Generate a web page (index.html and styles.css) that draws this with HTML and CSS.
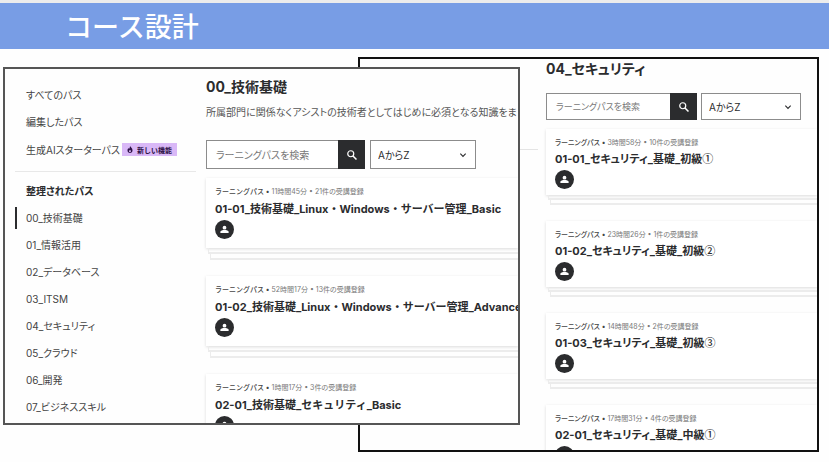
FILE: index.html
```html
<!DOCTYPE html>
<html lang="ja">
<head>
    <meta charset="UTF-8">
    <meta name="viewport" content="width=device-width, initial-scale=1.0">
    <title>コース設計</title>
    <link rel="stylesheet" href="styles.css">
</head>
<body>
    <svg class="sprite" aria-hidden="true">
        <symbol id="icon-search" viewBox="0 0 24 24">
            <circle cx="9.500" cy="9.500" r="6" fill="none" stroke="currentColor" stroke-width="2.4"/>
            <path d="M14 14l7 7" fill="none" stroke="currentColor" stroke-width="3"/>
        </symbol>
        <symbol id="icon-user" viewBox="0 0 24 24">
            <circle cx="12" cy="7" r="5"/>
            <path d="M1 21v-3C1 15 7 13.500 12 13.500s11 1.500 11 4.500v3z"/>
        </symbol>
        <symbol id="icon-chevron" viewBox="0 0 12 12">
            <path d="M2 4l4 4 4-4" fill="none" stroke="currentColor" stroke-width="1.700"/>
        </symbol>
        <symbol id="icon-flame" viewBox="0 0 12 14">
            <path fill-rule="evenodd" d="M6 0c1 2 5 4 5 8.500C11 12 9 14 6 14S1 12 1 8.500C1 6.500 2 5 3 4l1 2C5.500 4.500 6 2 6 0zM6 7.500c-1 1-2 2-2 3.200 0 1 .8 1.800 2 1.800s2-.8 2-1.800C8 9.500 7 8.500 6 7.500z"/>
        </symbol>
    </svg>

    <header class="page-header">
        <h1>コース設計</h1>
    </header>

    <div class="stage">
        <section class="window window-back">
            <div class="sidebar-rule"></div>
            <main class="content">
                <h2>04_セキュリティ</h2>
                <form class="toolbar">
                    <div class="search">
                        <input type="text" placeholder="ラーニングパスを検索" aria-label="ラーニングパスを検索">
                        <button type="button" aria-label="検索"><svg><use href="#icon-search"/></svg></button>
                    </div>
                    <div class="sort">
                        <select aria-label="並べ替え"><option>AからZ</option></select>
                        <svg><use href="#icon-chevron"/></svg>
                    </div>
                </form>
                <ul class="path-list">
                    <li>
                        <article class="card">
                            <p class="meta"><b>ラーニングパス •</b> 3時間58分 • 10件の受講登録</p>
                            <h3>01-01_セキュリティ_基礎_初級<span class="num">①</span></h3>
                            <span class="avatar"><svg><use href="#icon-user"/></svg></span>
                        </article>
                        <div class="layer"></div>
                        <div class="layer layer-last"></div>
                    </li>
                    <li>
                        <article class="card">
                            <p class="meta"><b>ラーニングパス •</b> 23時間26分 • 1件の受講登録</p>
                            <h3>01-02_セキュリティ_基礎_初級<span class="num">②</span></h3>
                            <span class="avatar"><svg><use href="#icon-user"/></svg></span>
                        </article>
                        <div class="layer"></div>
                        <div class="layer layer-last"></div>
                    </li>
                    <li>
                        <article class="card">
                            <p class="meta"><b>ラーニングパス •</b> 14時間48分 • 2件の受講登録</p>
                            <h3>01-03_セキュリティ_基礎_初級<span class="num">③</span></h3>
                            <span class="avatar"><svg><use href="#icon-user"/></svg></span>
                        </article>
                        <div class="layer"></div>
                        <div class="layer layer-last"></div>
                    </li>
                    <li>
                        <article class="card">
                            <p class="meta"><b>ラーニングパス •</b> 17時間31分 • 4件の受講登録</p>
                            <h3>02-01_セキュリティ_基礎_中級<span class="num">①</span></h3>
                            <span class="avatar"><svg><use href="#icon-user"/></svg></span>
                        </article>
                    </li>
                </ul>
            </main>
        </section>

        <section class="window window-front">
            <nav class="sidebar">
                <ul class="nav-top">
                    <li><a href="#">すべてのパス</a></li>
                    <li><a href="#">編集したパス</a></li>
                    <li>
                        <a href="#">生成AIスターターパス</a>
                        <span class="badge"><svg><use href="#icon-flame"/></svg>新しい機能</span>
                    </li>
                </ul>
                <h3>整理されたパス</h3>
                <ul>
                    <li class="active"><a href="#">00_技術基礎</a></li>
                    <li><a href="#">01_情報活用</a></li>
                    <li><a href="#">02_データベース</a></li>
                    <li><a href="#">03_ITSM</a></li>
                    <li><a href="#">04_セキュリティ</a></li>
                    <li><a href="#">05_クラウド</a></li>
                    <li><a href="#">06_開発</a></li>
                    <li><a href="#">07_ビジネススキル</a></li>
                </ul>
            </nav>
            <main class="content">
                <h2>00_技術基礎</h2>
                <p class="description">所属部門に関係なくアシストの技術者としてはじめに必須となる知識をま</p>
                <form class="toolbar">
                    <div class="search">
                        <input type="text" placeholder="ラーニングパスを検索" aria-label="ラーニングパスを検索">
                        <button type="button" aria-label="検索"><svg><use href="#icon-search"/></svg></button>
                    </div>
                    <div class="sort">
                        <select aria-label="並べ替え"><option>AからZ</option></select>
                        <svg><use href="#icon-chevron"/></svg>
                    </div>
                </form>
                <ul class="path-list">
                    <li>
                        <article class="card">
                            <p class="meta"><b>ラーニングパス •</b> 11時間45分 • 21件の受講登録</p>
                            <h3>01-01_技術基礎_Linux・Windows・サーバー管理_Basic</h3>
                            <span class="avatar"><svg><use href="#icon-user"/></svg></span>
                        </article>
                        <div class="layer"></div>
                        <div class="layer layer-last"></div>
                    </li>
                    <li>
                        <article class="card">
                            <p class="meta"><b>ラーニングパス •</b> 52時間17分 • 13件の受講登録</p>
                            <h3>01-02_技術基礎_Linux・Windows・サーバー管理_Advance</h3>
                            <span class="avatar"><svg><use href="#icon-user"/></svg></span>
                        </article>
                        <div class="layer"></div>
                        <div class="layer layer-last"></div>
                    </li>
                    <li>
                        <article class="card">
                            <p class="meta"><b>ラーニングパス •</b> 1時間17分 • 3件の受講登録</p>
                            <h3>02-01_技術基礎_セキュリティ_Basic</h3>
                            <span class="avatar"><svg><use href="#icon-user"/></svg></span>
                        </article>
                    </li>
                </ul>
            </main>
        </section>
    </div>
</body>
</html>
```

FILE: styles.css
```css
* {
    box-sizing: border-box;
}

body {
    margin: 0;
    height: 100vh;
    display: flex;
    flex-direction: column;
    overflow: hidden;
    background: #fefefe;
    color: #2b2c2e;
    font-family: Inter, "Noto Sans CJK JP", sans-serif;
    font-size: 10px;
    font-feature-settings: "palt";
}

h1, h2, h3, p, ul {
    margin: 0;
    padding: 0;
}

ul {
    list-style: none;
}

a {
    color: inherit;
    text-decoration: none;
}

.sprite {
    display: none;
}

.page-header {
    background: #789de5;
    border-top: 3px solid #ececec;
    padding: 4px 65px 0;
}

.page-header h1 {
    color: #fff;
    font-size: 27px;
    font-weight: 500;
    line-height: 42px;
    font-feature-settings: normal;
}

/* two windows that share the middle cells */
.stage {
    flex: 1;
    min-height: 0;
    display: grid;
    grid-template-columns: 3px 355fr 162fr 299fr 10px;
    grid-template-rows: 8px 10px minmax(0, 1fr) 27px 10px;
}

.window {
    display: grid;
    min-width: 0;
    min-height: 0;
    overflow: hidden;
    background: #fefefe;
    white-space: nowrap;
}

.window-back {
    grid-area: 2 / 3 / 5 / 5;
    grid-template-columns: 178px minmax(0, 1fr);
    column-gap: 8px;
    border: 2px solid #111;
}

.window-front {
    grid-area: 3 / 2 / 4 / 4;
    grid-template-columns: 191px minmax(0, 1fr);
    column-gap: 10px;
    border: 2px solid #555;
}

/* sidebar */
.sidebar {
    padding: 12px 0 0 10px;
    color: #444;
}

.sidebar li {
    display: flex;
    align-items: center;
    height: 27px;
    padding-left: 11px;
}

.sidebar h3 {
    padding-left: 11px;
    font-size: 10px;
    line-height: 26px;
    color: #2b2c2e;
}

.nav-top {
    padding-bottom: 7px;
    margin-bottom: 6px;
    border-bottom: 1px solid #e8e8e8;
}

.nav-top li:last-child {
    height: 29px;
}

.sidebar .active::before {
    content: "";
    width: 2px;
    height: 22px;
    margin-left: -11px;
    margin-right: 9px;
    background: #2b2c2e;
}

.badge {
    display: flex;
    align-items: center;
    gap: 4px;
    height: 13px;
    margin-left: 2px;
    padding: 0 5px;
    background: #d9b8f7;
    color: #2c1046;
    font-size: 7px;
    font-weight: 700;
    font-feature-settings: normal;
}

.badge svg {
    width: 6px;
    height: 7px;
    fill: currentColor;
}

.sidebar-rule {
    height: 91px;
    border-bottom: 1px solid #e4e4e4;
}

/* content */
.content {
    min-width: 0;
}

.content h2 {
    font-size: 14px;
    line-height: 20px;
}

.window-front h2 {
    margin-top: 8px;
}

.description {
    margin-top: 7px;
    line-height: 16px;
    color: #555;
}

.toolbar {
    display: flex;
    gap: 5px;
    height: 29px;
    margin: 20px 0 9px;
}

.search {
    display: flex;
    width: 159px;
}

.search input {
    flex: 1;
    min-width: 0;
    padding: 0 9px;
    border: 1px solid #8c8c8c;
    border-right: 0;
    background: #fff;
    font: inherit;
    font-feature-settings: inherit;
}

.search input::placeholder {
    color: #777;
}

.search button {
    display: grid;
    place-items: center;
    width: 27px;
    padding: 0;
    border: 0;
    background: #2b2c2e;
    color: #fff;
}

.search svg {
    width: 12px;
    height: 12px;
}

.sort {
    display: grid;
    align-items: center;
    width: 106px;
}

.sort select,
.sort svg {
    grid-area: 1 / 1;
}

.sort select {
    appearance: none;
    width: 100%;
    height: 100%;
    padding: 0 7px;
    border: 1px solid #8c8c8c;
    border-radius: 0;
    background: #fff;
    color: #2b2c2e;
    font: inherit;
    font-feature-settings: inherit;
}

.sort svg {
    justify-self: end;
    width: 8px;
    height: 8px;
    margin-right: 9px;
    pointer-events: none;
}

.path-list li {
    height: 98px;
}

.card {
    height: 70px;
    padding: 8px 9px;
    background: #fff;
    box-shadow: 0 1px 3px rgba(0, 0, 0, 0.14);
}

.meta {
    font-size: 7px;
    line-height: 11px;
    color: #777;
}

.meta b {
    font-weight: 500;
    color: #444;
    font-feature-settings: normal;
}

.card h3 {
    margin-top: 2px;
    font-size: 11px;
    line-height: 20px;
    font-feature-settings: normal;
}

.num {
    font-family: "Noto Sans CJK JP", sans-serif;
    font-weight: 500;
}

.avatar {
    display: grid;
    place-items: center;
    width: 19px;
    height: 19px;
    margin-top: 1px;
    border-radius: 50%;
    background: #2b2c2e;
}

.avatar svg {
    width: 9px;
    height: 9px;
    fill: #fff;
}

.layer {
    height: 6px;
    margin-left: 2px;
    border: solid #ececec;
    border-width: 0 0 2px 1px;
}

.layer-last {
    margin-left: 4px;
}

/* the back window is drawn slightly smaller */
.window-back .toolbar {
    gap: 4px;
    height: 27px;
    margin: 14px 0 9px;
}

.window-back .search {
    width: 151px;
}

.window-back .search input {
    font-size: 9px;
}

.window-back .sort {
    width: 100px;
}

.window-back .path-list li {
    height: 92px;
}

.window-back .card {
    height: 66px;
}

.window-back .card h3 {
    margin-top: 0;
    font-feature-settings: "palt";
}

.window-back .meta b {
    font-feature-settings: "palt";
}

.window-back .layer {
    height: 5px;
}
```
